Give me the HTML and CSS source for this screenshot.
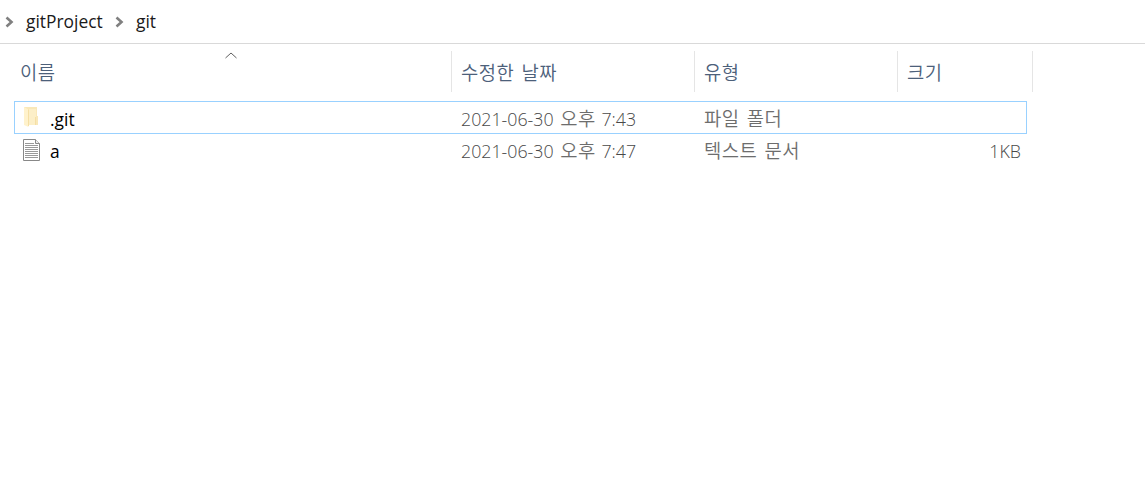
FILE: index.html
```html
<!DOCTYPE html>
<html lang="ko">
<head>
    <meta charset="UTF-8">
    <meta name="viewport" content="width=device-width, initial-scale=1.0">
    <title>git</title>
    <link rel="stylesheet" href="styles.css">
</head>
<body>
    <nav class="address-bar">
        <svg class="chevron" width="9" height="12" viewBox="0 0 9 12"><path d="M1.5 1.5L6.5 6L1.5 10.5"/></svg>
        <span class="crumb parent">gitProject</span>
        <svg class="chevron" width="9" height="12" viewBox="0 0 9 12"><path d="M1.5 1.5L6.5 6L1.5 10.5"/></svg>
        <span class="crumb">git</span>
    </nav>
    <main class="file-list">
        <div class="list-header">
            <div class="column name">
                <span class="ko">이름</span>
                <svg class="sort" width="12" height="7" viewBox="0 0 12 7"><path d="M0.5 6L6 1L11.5 6"/></svg>
            </div>
            <div class="column date"><span class="ko">수정한 날짜</span></div>
            <div class="column type"><span class="ko">유형</span></div>
            <div class="column size"><span class="ko">크기</span></div>
        </div>
        <div class="row selected">
            <div class="cell name">
                <svg class="icon" width="18" height="20" viewBox="0 0 18 20">
                    <path fill="#f9e8b9" d="M1 0H14V9H15V18H1Z"/>
                    <path fill="#fcefc8" d="M6 2H13V18H6Z"/>
                    <path fill="#fff2cc" d="M1 0L5.5 2.5V20L1 18Z"/>
                    <path stroke="#f5dfa5" d="M5.5 2.5V19M12.5 10V18"/>
                </svg>
                <span class="label">.git</span>
            </div>
            <div class="cell date"><span class="label">2021-06-30 </span><span class="ko">오후</span><span class="label"> 7:43</span></div>
            <div class="cell type"><span class="ko">파일 폴더</span></div>
            <div class="cell size"></div>
        </div>
        <div class="row">
            <div class="cell name">
                <svg class="icon" width="18" height="22" viewBox="0 0 18 22">
                    <path fill="#fff" stroke="#888" d="M0.5 0.5H12.5L16.5 4.5V21.5H0.5Z"/>
                    <path fill="#eee" stroke="#888" d="M12.5 0.5V4.5H16.5"/>
                    <path stroke="#999" d="M2 4.5H11M2 6.5H15M2 8.5H15M2 10.5H15M2 12.5H15M2 14.5H15M2 16.5H15M2 18.5H15"/>
                </svg>
                <span class="label">a</span>
            </div>
            <div class="cell date"><span class="label">2021-06-30 </span><span class="ko">오후</span><span class="label"> 7:47</span></div>
            <div class="cell type"><span class="ko">텍스트 문서</span></div>
            <div class="cell size"><span class="label">1KB</span></div>
        </div>
    </main>
</body>
</html>
```
FILE: styles.css
```css
* {
    box-sizing: border-box;
}
body {
    margin: 0;
    background: #fff;
    color: #000;
    font-family: "Open Sans", "Noto Sans CJK KR", sans-serif;
    font-size: 17.4px;
    line-height: 24px;
    overflow: hidden;
}
.address-bar {
    display: flex;
    align-items: center;
    height: 44px;
    padding-left: 5px;
    border-bottom: 1px solid #d9d9d9;
    color: #1a1a1a;
}
.chevron {
    fill: none;
    stroke: #808080;
    stroke-width: 2.6;
}
.crumb {
    margin-top: -2px;
}
.parent {
    width: 77px;
    margin: -2px 12px 0;
}
.address-bar .crumb:last-child {
    margin-left: 12px;
}
.ko {
    font-family: "Noto Sans CJK KR", sans-serif;
    font-weight: 350;
    font-size: 18.8px;
    letter-spacing: 0.5px;
    word-spacing: 1.5px;
}
.list-header {
    display: flex;
    margin-top: 7px;
    height: 41px;
    color: #4c607a;
}
.column {
    display: flex;
    align-items: center;
    padding: 1px 0 0 9px;
    border-right: 1px solid #e5e5e5;
}
.column.name {
    width: 452px;
    padding-left: 20px;
    position: relative;
}
.column.date {
    width: 243px;
}
.column.type {
    width: 203px;
}
.column.size {
    width: 135px;
}
.sort {
    position: absolute;
    left: 225px;
    top: 1px;
    fill: none;
    stroke: #606060;
}
.row {
    display: flex;
    width: 1013px;
    height: 32px;
    margin-left: 14px;
    border: 0 solid transparent;
    border-width: 0 1px;
    color: #6d6d6d;
}
.row.selected {
    height: 33px;
    margin-top: 9px;
    border: 1px solid #99d1ff;
}
.cell {
    display: flex;
    align-items: center;
    white-space: pre;
}
.label {
    padding-top: 2px;
}
.cell.name {
    width: 446px;
    padding-left: 8px;
    color: #000;
}
.icon {
    margin-right: 9px;
    margin-bottom: 1px;
    fill: none;
}
.cell.date {
    width: 243px;
}
.cell.date .label,
.cell.size .label {
    font-size: 17.8px;
    font-weight: 300;
    color: #484848;
}
.cell.date .ko {
    margin: 0 1px 0 2px;
}
.cell.type {
    width: 203px;
}
.cell.size {
    width: 114px;
    justify-content: flex-end;
}
```
